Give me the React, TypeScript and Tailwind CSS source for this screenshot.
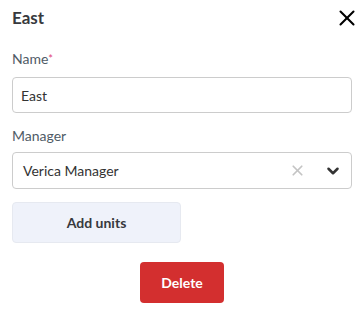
import { X, ChevronDown } from "lucide-react";

const font = { fontFamily: '"Source Sans Pro", "Lato", "Liberation Sans", sans-serif' };

const EditGroup = () => {
  return (
    <div className="w-[360px] h-[317px] bg-white pl-3 pr-2 pt-[8px] text-[#333]" style={font}>
      <div className="flex items-center justify-between h-[20px]">
        <h2 className="text-[17px] font-bold text-[#37393d]">East</h2>
        <X className="w-[26px] h-[26px] -mr-[8px] text-black" strokeWidth={1.9} />
      </div>

      <label className="block mt-[22px] text-[14px] leading-[18px] text-[#4f5b66]">
        Name<span className="text-[#e0457b] align-top text-[11px]">*</span>
      </label>
      <input
        defaultValue="East"
        className="mt-[9px] block w-full h-[36px] rounded-[4px] border border-[#cccccc] px-[8px] text-[14px] text-[#333] outline-none"
      />

      <label className="block mt-[14px] text-[14px] leading-[18px] text-[#4f5b66]">Manager</label>
      <div className="mt-[7px] flex items-center h-[37px] rounded-[4px] border border-[#cccccc] pl-[10px] pr-[9px]">
        <span className="flex-1 text-[14px] text-[#333]">Verica Manager</span>
        <X className="w-[17px] h-[17px] text-[#c4c4c4] mr-[18px]" strokeWidth={2.4} />
        <ChevronDown className="w-[18px] h-[18px] text-[#333]" strokeWidth={3.4} />
      </div>

      <button className="mt-[13px] block w-[169px] h-[41px] rounded-[4px] border border-[#e6e9f0] bg-[#eff2fa] text-[14px] font-bold text-[#37393d]">
        Add units
      </button>

      <div className="flex justify-center mt-[19px]">
        <button className="w-[84px] h-[41px] rounded-[4px] bg-[#d32f2f] text-[14px] font-bold text-white">
          Delete
        </button>
      </div>
    </div>
  );
};

export default function App() {
  return <EditGroup />;
}
